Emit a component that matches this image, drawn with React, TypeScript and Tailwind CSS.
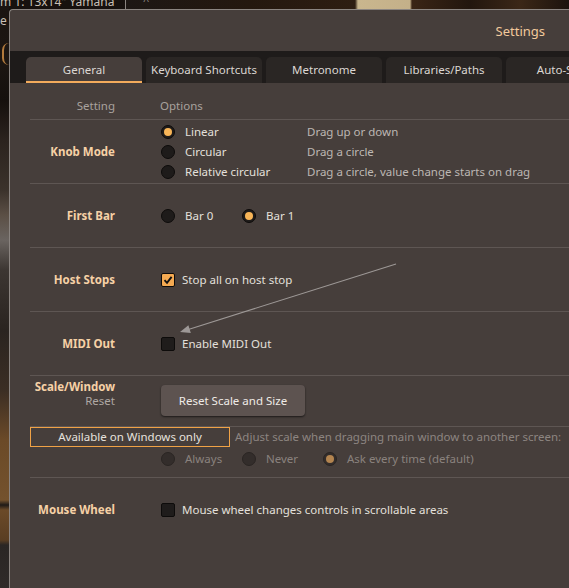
import clsx from 'clsx';
import type { ReactNode } from 'react';

type Option = { label: string; description?: string; on?: boolean };

const knobModes: Option[] = [
  { label: 'Linear', description: 'Drag up or down', on: true },
  { label: 'Circular', description: 'Drag a circle' },
  { label: 'Relative circular', description: 'Drag a circle, value change starts on drag' },
];

const tabs = ['General', 'Keyboard Shortcuts', 'Metronome', 'Libraries/Paths', 'Auto-Save'];

function Radio({ on, dim }: { on?: boolean; dim?: boolean }) {
  return (
    <span
      className={clsx(
        'flex h-[14px] w-[14px] shrink-0 items-center justify-center rounded-full border',
        dim ? 'border-[#2a2523] bg-[#332d2b]' : 'border-[#0d0b0a] bg-[#1e1b1a]',
      )}
    >
      {on && (
        <span className={clsx('h-[8px] w-[8px] rounded-full', dim ? 'bg-[#b3844f]' : 'bg-[#f7b457]')} />
      )}
    </span>
  );
}

function Checkbox({ on }: { on?: boolean }) {
  return (
    <span
      className={clsx(
        'flex h-[14px] w-[14px] shrink-0 items-center justify-center rounded-[2px] border border-[#0d0b0a]',
        on ? 'bg-[#f5aa52]' : 'bg-[#1f1c1b]',
      )}
    >
      {on && (
        <svg width="10" height="10" viewBox="0 0 10 10">
          <path d="M1.5 5.2 L4 7.8 L8.6 1.8" fill="none" stroke="#111" strokeWidth="1.9" />
        </svg>
      )}
    </span>
  );
}

function Row({ label, children }: { label: string; children: ReactNode }) {
  return (
    <div className="flex h-[64px] items-center border-t border-[#5e5653]">
      <div className="w-[85px] shrink-0 text-right font-bold text-[#f6d1a6]">{label}</div>
      <div className="ml-[46px] flex items-center">{children}</div>
    </div>
  );
}

function Backdrop() {
  return (
    <>
      <div className="absolute left-0 top-0 h-[9px] w-[569px] bg-[linear-gradient(to_right,#17110e_0px,#17110e_125px,#8a8480_125px,#8a8480_126px,#1d1714_126px,#24180f_250px,#2e1e12_355px,#c9b68e_358px,#c4b089_410px,#3a2516_412px,#22160e_470px,#3b2717_520px,#1c130d_569px)]" />
      <div className="absolute left-0 top-0 h-[588px] w-[9px] bg-[linear-gradient(to_bottom,#1a1411_0px,#1c1612_60px,#15100d_100px,#2b231e_140px,#3b322b_190px,#5b4f45_215px,#6a6460_240px,#3c3632_270px,#2a2420_330px,#3b2e24_390px,#6b4a28_440px,#74522d_500px,#1e1a18_505px,#6b4a28_510px,#5a3e22_540px,#2a2624_545px,#302b29_588px)]" />
      <div className="absolute left-[0px] top-[-6px] whitespace-nowrap text-[12px] leading-[16px] text-[#c9c0b6]">
        m 1: 13x14" Yamaha
      </div>
      <div className="absolute left-[0px] top-[13px] text-[12px] leading-[16px] text-[#c9c0b6]">e |</div>
      <div className="absolute left-[143px] top-[-6px] text-[11px] leading-[14px] text-[#8c8682]">^</div>
      <div className="absolute left-[2px] top-[43px] h-[22px] w-[14px] rounded-full border-l-2 border-[#b27a3c]" />
    </>
  );
}

function Arrow() {
  return (
    <svg className="pointer-events-none absolute left-0 top-0 z-20" width="569" height="588">
      <line x1="396" y1="264" x2="186" y2="330.2" stroke="#9d9896" strokeWidth="1.1" />
      <polygon points="180,332 190.8,332.9 188.4,325.3" fill="#9d9896" />
    </svg>
  );
}

export default function App() {
  return (
    <div className="relative h-[588px] w-[569px] overflow-hidden bg-[#120e0c] pl-[9px] pt-[9px] font-['Noto_Sans',sans-serif] text-[11.5px] leading-[16px]">
      <Backdrop />
      <div className="relative z-10 h-[600px] w-[580px] overflow-hidden rounded-tl-[4px] border-l border-t border-[#8b8581] bg-[#463e3b]">
        <header className="flex h-[41px] items-center justify-end pr-[44px] text-[13px] text-[#f2c99c]">
          Settings
        </header>
        <nav className="flex h-[32px] items-end gap-[4px] bg-[#1e1b1a] pl-[16px]">
          {tabs.map((tab, i) => (
            <div
              key={tab}
              className={clsx(
                'flex h-[26px] w-[116px] shrink-0 items-center justify-center rounded-t-[5px] text-[#dcd7d3]',
                i === 0 ? 'border-b-2 border-[#f3ab5c] bg-[#463e3b] pt-[2px]' : 'bg-[#2a2624]',
              )}
            >
              {tab}
            </div>
          ))}
        </nav>

        <section className="ml-[20px]">
          <div className="flex h-[36px] items-end pb-[5px] text-[#a9a29e]">
            <div className="w-[85px] text-right">Setting</div>
            <div className="ml-[45px]">Options</div>
          </div>

          <Row label="Knob Mode">
            <div className="flex flex-col">
              {knobModes.map((mode) => (
                <div key={mode.label} className="flex h-[20px] items-center">
                  <div className="flex w-[146px] items-center gap-[10px] text-[#e4e0dc]">
                    <Radio on={mode.on} />
                    {mode.label}
                  </div>
                  <span className="text-[#bdb7b3]">{mode.description}</span>
                </div>
              ))}
            </div>
          </Row>

          <Row label="First Bar">
            <div className="flex w-[81px] items-center gap-[10px] text-[#e4e0dc]">
              <Radio />
              Bar 0
            </div>
            <div className="flex items-center gap-[10px] text-[#e4e0dc]">
              <Radio on />
              Bar 1
            </div>
          </Row>

          <Row label="Host Stops">
            <div className="flex items-center gap-[7px] text-[#e4e0dc]">
              <Checkbox on />
              Stop all on host stop
            </div>
          </Row>

          <Row label="MIDI Out">
            <div className="flex items-center gap-[7px] text-[#e4e0dc]">
              <Checkbox />
              Enable MIDI Out
            </div>
          </Row>

          <div className="flex h-[51px] items-start border-t border-[#5e5653] pt-[4px]">
            <div className="flex w-[85px] shrink-0 flex-col items-end leading-[14px]">
              <span className="font-bold text-[#f6d1a6]">Scale/Window</span>
              <span className="text-[#aea7a3]">Reset</span>
            </div>
            <button className="ml-[46px] mt-[5px] h-[31px] w-[144px] rounded-[4px] bg-[#5d5350] text-[#efebe7] shadow-[0_1px_2px_rgba(0,0,0,0.6)]">
              Reset Scale and Size
            </button>
          </div>

          <div className="h-[51px] border-t border-[#5e5653]">
            <div className="flex h-[20px] items-center">
              <div className="flex h-[20px] w-[200px] items-center justify-center border border-[#f0a246] text-[#e6e2de]">
                Available on Windows only
              </div>
              <span className="ml-[5px] whitespace-nowrap text-[#8d8581]">
                Adjust scale when dragging main window to another screen:
              </span>
            </div>
            <div className="mt-[2px] flex h-[20px] items-center pl-[131px] text-[#8a827e]">
              <div className="flex w-[81px] items-center gap-[10px]">
                <Radio dim />
                Always
              </div>
              <div className="flex w-[81px] items-center gap-[10px]">
                <Radio dim />
                Never
              </div>
              <div className="flex items-center gap-[10px]">
                <Radio dim on />
                Ask every time (default)
              </div>
            </div>
          </div>

          <Row label="Mouse Wheel">
            <div className="flex items-center gap-[7px] text-[#e4e0dc]">
              <Checkbox />
              Mouse wheel changes controls in scrollable areas
            </div>
          </Row>
        </section>
      </div>
      <Arrow />
    </div>
  );
}
